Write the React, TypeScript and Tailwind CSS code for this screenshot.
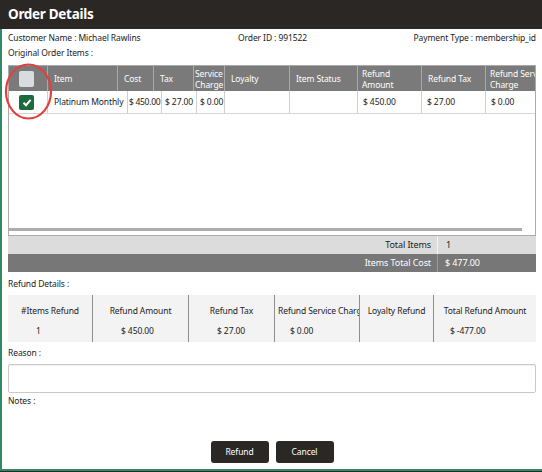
import React from "react";

const hdr: { w: number; label: string[]; pl: number }[] = [
  { w: 38, label: [], pl: 0 },
  { w: 70, label: ["Item"], pl: 6 },
  { w: 36, label: ["Cost"], pl: 6 },
  { w: 40, label: ["Tax"], pl: 6 },
  { w: 31, label: ["Service", "Charge"], pl: 1 },
  { w: 65, label: ["Loyalty"], pl: 6 },
  { w: 68, label: ["Item Status"], pl: 6 },
  { w: 64, label: ["Refund", "Amount"], pl: 4 },
  { w: 64, label: ["Refund Tax"], pl: 6 },
  { w: 52, label: ["Refund Service", "Charge"], pl: 4 },
];

const row = [
  { w: 38, v: "", pl: 0 },
  { w: 80, v: "Platinum Monthly", pl: 6 },
  { w: 34, v: "$ 450.00", pl: 1 },
  { w: 35, v: "$ 27.00", pl: 3 },
  { w: 28, v: "$ 0.00", pl: 3 },
  { w: 65, v: "", pl: 6 },
  { w: 68, v: "", pl: 6 },
  { w: 64, v: "$ 450.00", pl: 5 },
  { w: 64, v: "$ 27.00", pl: 5 },
  { w: 52, v: "$ 0.00", pl: 5 },
];

const refund = [
  { w: 84, label: "#Items Refund", v: "1", pl: 28, left: false },
  { w: 96, label: "Refund Amount", v: "$ 450.00", pl: 28, left: false },
  { w: 86, label: "Refund Tax", v: "$ 27.00", pl: 28, left: false },
  { w: 85, label: "Refund Service Charge", v: "$ 0.00", pl: 15, left: true },
  { w: 74, label: "Loyalty Refund", v: "", pl: 15, left: false },
  { w: 103, label: "Total Refund Amount", v: "$ -477.00", pl: 16, left: false },
];

export default function App() {
  return (
    <div className="relative w-[542px] h-[472px] bg-[#2b2725] font-['Noto_Sans',sans-serif] text-[8.5px] tracking-[-0.1px] text-[#222] overflow-hidden">
      <div className="h-[29px] flex items-center pl-2 text-white font-bold text-[13.5px] tracking-[-0.3px]">
        Order Details
      </div>
      <div className="h-[442px] bg-white border-l-2 border-b-2 border-[#2f8a64] pl-[6px] pr-[6px] flex flex-col">
        <div className="h-[18px] flex items-center">
          <span className="w-[230px]">Customer Name : Michael Rawlins</span>
          <span className="flex-1">Order ID : 991522</span>
          <span>Payment Type : membership_id</span>
        </div>
        <div className="h-[12px] flex items-center">Original Order Items :</div>
        <div className="mt-[6px] h-[171px] border border-[#ababab] bg-white flex flex-col overflow-hidden">
          <div className="h-[25px] bg-[#7a7a7a] flex text-white shrink-0">
            {hdr.map((h, i) => (
              <div
                key={i}
                style={{ width: h.w, paddingLeft: h.pl }}
                className={`shrink-0 h-full flex flex-col justify-center overflow-hidden whitespace-nowrap leading-[11px] ${i > 0 ? "border-l border-[#a9a9a9]" : ""}`}
              >
                {i === 0 ? (
                  <div className="ml-[10px] w-[15px] h-[16px] rounded-[2px] bg-[#d9dcde]" />
                ) : (
                  h.label.map((l, j) => <div key={j}>{l}</div>)
                )}
              </div>
            ))}
          </div>
          <div className="h-[23px] flex border-b border-[#d6d6d6] shrink-0">
            {row.map((c, i) => (
              <div
                key={i}
                style={{ width: c.w, paddingLeft: c.pl }}
                className={`shrink-0 h-full flex items-center overflow-hidden whitespace-nowrap ${i > 0 ? "border-l border-[#d0d0d0]" : ""}`}
              >
                {i === 0 ? (
                  <div className="ml-[10px] w-[15px] h-[15px] rounded-[2px] bg-[#1c6b3f] flex items-center justify-center">
                    <svg width="10" height="9" viewBox="0 0 10 9">
                      <polyline points="1.5,4.8 4,7.2 8.6,1.8" fill="none" stroke="white" strokeWidth="2" />
                    </svg>
                  </div>
                ) : i === 2 ? (
                  <span className="tracking-[-0.3px]">{c.v}</span>
                ) : (
                  c.v
                )}
              </div>
            ))}
          </div>
          <div className="flex-1" />
          <div className="h-[3px] w-[513px] bg-[#acacac] shrink-0" />
          <div className="h-[4px] shrink-0" />
        </div>
        <div className="h-[18px] bg-[#dcdcdc] flex text-[9px]">
          <div className="w-[429px] flex items-center justify-end pr-[6px]">Total Items</div>
          <div className="flex-1 border-l border-[#f4f4f4] flex items-center pl-[8px]">1</div>
        </div>
        <div className="h-[18px] bg-[#777777] flex text-white text-[9px]">
          <div className="w-[429px] flex items-center justify-end pr-[6px]">Items Total Cost</div>
          <div className="flex-1 border-l border-[#9a9a9a] flex items-center pl-[7px]">$ 477.00</div>
        </div>
        <div className="h-[23px] flex items-center pt-[1px]">Refund Details :</div>
        <div className="h-[47px] bg-[#f3f3f3] flex">
          {refund.map((c, i) => (
            <div
              key={i}
              style={{ width: c.w }}
              className={`shrink-0 h-full flex flex-col overflow-hidden ${i > 0 ? "border-l border-[#8f8f8f]" : ""}`}
            >
              <div
                className={`h-[30px] flex items-center whitespace-nowrap pt-[2px] ${c.left ? "justify-start pl-[3px]" : "justify-center"}`}
              >
                {c.label}
              </div>
              <div className="h-[12px] flex items-center whitespace-nowrap" style={{ paddingLeft: c.pl }}>
                {c.v}
              </div>
            </div>
          ))}
        </div>
        <div className="h-[22px] flex items-center">Reason :</div>
        <div className="h-[29px] border border-[#c9c9c9] rounded-[2px] shadow-[inset_0_1px_1px_rgba(0,0,0,0.06)]" />
        <div className="h-[16px] flex items-center">Notes :</div>
        <div className="mt-[32px] flex justify-center gap-[7px]">
          <div className="w-[58px] h-[22px] rounded-[3px] bg-[#2b2725] text-white flex items-center justify-center">
            Refund
          </div>
          <div className="w-[58px] h-[22px] rounded-[3px] bg-[#2b2725] text-white flex items-center justify-center">
            Cancel
          </div>
        </div>
      </div>
      <svg className="absolute left-[3px] top-[62px]" width="52" height="60" viewBox="0 0 52 60">
        <ellipse cx="25.5" cy="29.5" rx="22.5" ry="27" fill="none" stroke="#e0413f" strokeWidth="2.2" />
      </svg>
    </div>
  );
}
